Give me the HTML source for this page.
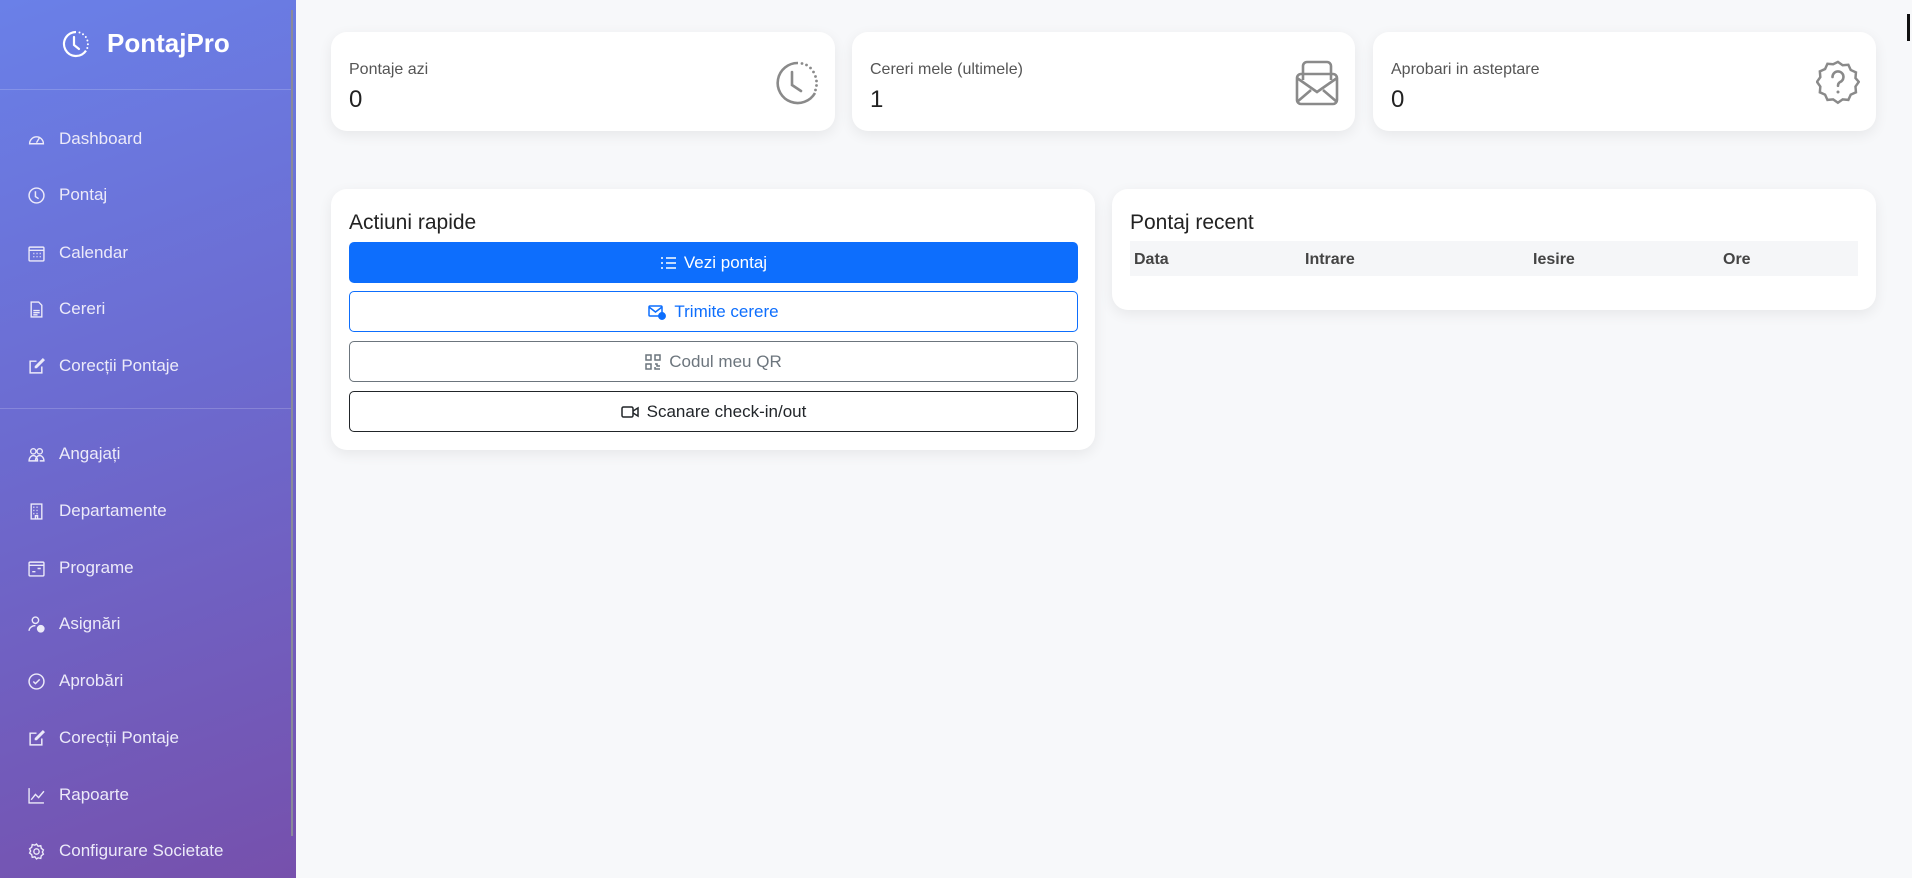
<!DOCTYPE html>
<html><head><meta charset="utf-8"><style>
*{box-sizing:border-box;margin:0;padding:0}
body{width:1912px;height:878px;overflow:hidden;background:#f7f8fa;font-family:"Liberation Sans",sans-serif;position:relative;color:#212529}
.sb{position:absolute;left:0;top:0;width:296px;height:878px;background:linear-gradient(160deg,#6a80e8 0%,#6c6bd0 45%,#7650ac 100%)}
.sbline{position:absolute;left:291px;top:10px;width:2px;height:826px;background:#8a8a9a}
.logo{position:absolute;left:62px;top:28px;display:flex;align-items:center;color:#fff;font-weight:bold;font-size:26px}
.logo svg{margin-right:17px}
.hr{position:absolute;left:0;width:292px;height:1px;background:rgba(255,255,255,.18)}
.nav{position:absolute;left:28px;display:flex;align-items:center;color:#eceaf9;font-size:17px}
.nav svg{width:17px;height:17px;margin-right:14px}
.card{position:absolute;background:#fff;border-radius:16px;box-shadow:0 4px 14px rgba(0,0,0,.07)}
.lbl{position:absolute;left:18px;top:29px;font-size:16px;color:#555}
.val{position:absolute;left:18px;top:54px;font-size:24px;color:#222}
.ic{position:absolute;right:16px;top:28px}
.ttl{position:absolute;left:18px;top:22px;font-size:21px;color:#222}
.btn{position:absolute;left:18px;width:729px;height:41px;border-radius:5px;display:flex;align-items:center;justify-content:center;font-size:17px}
.btn svg{margin-right:8px}
</style></head><body>
<div class="sb">
<div class="logo"><svg width="28" height="28" viewBox="0 0 28 28" fill="none" stroke="#fff" stroke-width="2.2"><path d="M14 2a12 12 0 1 0 10 18.6" /><path d="M12 7v8l5 4" stroke-linecap="round"/><g fill="#fff" stroke="none"><circle cx="17.5" cy="2.5" r="1"/><circle cx="21" cy="4.2" r="1"/><circle cx="23.8" cy="7" r="1"/><circle cx="25.4" cy="10.5" r="1"/><circle cx="25.9" cy="14.3" r="1"/><circle cx="25.3" cy="18" r="1"/></g></svg>PontajPro</div>
<div class="hr" style="top:89px"></div>
<div class="hr" style="top:408px"></div>
</div>
<div class="sbline"></div>

<div class="card" style="left:331px;top:32px;width:504px;height:99px"><div class="lbl">Pontaje azi</div><div class="val">0</div>
<svg class="ic" style="right:14px" width="46" height="46" viewBox="0 0 46 46" fill="none" stroke="#8a8a8a" stroke-width="2.6"><path d="M23 3a20 20 0 1 0 17 30"/><path d="M17 12v13l9 6" stroke-linecap="round"/><g fill="#8a8a8a" stroke="none"><circle cx="27" cy="3.5" r="1.4"/><circle cx="31.5" cy="5" r="1.4"/><circle cx="35.5" cy="8" r="1.4"/><circle cx="38.5" cy="12" r="1.4"/><circle cx="40.5" cy="16.5" r="1.4"/><circle cx="41.5" cy="21" r="1.4"/><circle cx="41.5" cy="25.5" r="1.4"/><circle cx="40.5" cy="30" r="1.4"/></g></svg></div>
<div class="card" style="left:852px;top:32px;width:503px;height:99px"><div class="lbl">Cereri mele (ultimele)</div><div class="val">1</div>
<svg class="ic" width="44" height="46" viewBox="0 0 44 46" fill="none" stroke="#8a8a8a" stroke-width="2.6"><rect x="2" y="14" width="40" height="30" rx="4"/><path d="M8 20V6a4 4 0 0 1 4-4h20a4 4 0 0 1 4 4v14"/><path d="M2 18l20 14 20-14M2 42l14-12M42 42 28 30"/></svg></div>
<div class="card" style="left:1373px;top:32px;width:503px;height:99px"><div class="lbl">Aprobari in asteptare</div><div class="val">0</div>
<svg class="ic" width="44" height="46" viewBox="0 0 44 46" fill="none" stroke="#8a8a8a" stroke-width="2.6"><path d="M22 2l5 3.5 6-.5 2.5 5.5 5.5 2.5-.5 6L44 23l-3.5 5 .5 6-5.5 2.5L33 42l-6-.5L22 45l-5-3.5-6 .5-2.5-5.5L3 34l.5-6L0 23l3.5-5-.5-6 5.5-2.5L11 4l6 .5z" transform="translate(1 0) scale(.95)"/><path d="M16.5 17a5.5 5.5 0 1 1 8 4.8c-1.8 1-2.5 2-2.5 4" stroke-linecap="round"/><circle cx="22" cy="32" r="1.5" fill="#8a8a8a" stroke="none"/></svg></div>

<div class="card" style="left:331px;top:189px;width:764px;height:261px"><div class="ttl">Actiuni rapide</div>
<div class="btn" style="top:53px;background:#0d6efd;color:#fff"><svg width="16" height="14" viewBox="0 0 16 14" fill="none" stroke="#fff" stroke-width="1.6"><path d="M6 2h10M6 7h10M6 12h10M1 2h2M1 7h2M1 12h2"/></svg>Vezi pontaj</div>
<div class="btn" style="top:102px;border:1px solid #0d6efd;color:#0d6efd"><svg width="18" height="16" viewBox="0 0 18 16" fill="none" stroke="#0d6efd" stroke-width="1.5"><rect x="1" y="2" width="13" height="10" rx="1"/><path d="M1 3l6.5 5L14 3"/><circle cx="14" cy="12" r="3.2" fill="#0d6efd"/></svg>Trimite cerere</div>
<div class="btn" style="top:152px;border:1px solid #6c757d;color:#6c757d"><svg width="16" height="16" viewBox="0 0 16 16" fill="none" stroke="#6c757d" stroke-width="1.5"><rect x="1" y="1" width="5" height="5"/><rect x="10" y="1" width="5" height="5"/><rect x="1" y="10" width="5" height="5"/><path d="M10 10h2v2h3M10 13v2h5"/></svg>Codul meu QR</div>
<div class="btn" style="top:202px;border:1px solid #212529;color:#212529"><svg width="18" height="14" viewBox="0 0 18 14" fill="none" stroke="#212529" stroke-width="1.5"><rect x="1" y="2" width="11" height="10" rx="1.5"/><path d="M12 6l5-3v8l-5-3"/></svg>Scanare check-in/out</div>
</div>

<div class="card" style="left:1112px;top:189px;width:764px;height:121px"><div class="ttl">Pontaj recent</div>
<div style="position:absolute;left:18px;top:52px;width:728px;height:35px;background:#f5f6f8"></div>
<div style="position:absolute;left:22px;top:62px;font-weight:bold;font-size:16px;color:#444">Data</div>
<div style="position:absolute;left:193px;top:62px;font-weight:bold;font-size:16px;color:#444">Intrare</div>
<div style="position:absolute;left:421px;top:62px;font-weight:bold;font-size:16px;color:#444">Iesire</div>
<div style="position:absolute;left:611px;top:62px;font-weight:bold;font-size:16px;color:#444">Ore</div>
</div>
<div style="position:absolute;left:1907px;top:14px;width:3px;height:27px;background:#111"></div>

<div class="nav" style="top:129px"><svg viewBox="0 0 16 16" fill="none" stroke="#eceaf9" stroke-width="1.3"><path d="M1.5 12a6.5 6.5 0 1 1 13 0H1.5z"/><path d="M8 11l3-5"/></svg>Dashboard</div>
<div class="nav" style="top:185px"><svg viewBox="0 0 16 16" fill="none" stroke="#eceaf9" stroke-width="1.4"><circle cx="8" cy="8" r="7"/><path d="M7 4v5l3 2"/></svg>Pontaj</div>
<div class="nav" style="top:243px"><svg viewBox="0 0 16 16" fill="none" stroke="#eceaf9" stroke-width="1.3"><rect x="1" y="2" width="14" height="13" rx="1"/><path d="M1 5h14M5 8h1M8 8h1M11 8h1M5 11h1M8 11h1M11 11h1"/></svg>Calendar</div>
<div class="nav" style="top:299px"><svg viewBox="0 0 16 16" fill="none" stroke="#eceaf9" stroke-width="1.3"><path d="M3 1h7l3 3v11H3z"/><path d="M5 9h6M5 11h6M5 13h4"/></svg>Cereri</div>
<div class="nav" style="top:356px"><svg viewBox="0 0 16 16" fill="none" stroke="#eceaf9" stroke-width="1.4"><path d="M13 8v6H2V3h6"/><path d="M14 1l1 1-7 7H7V8z"/></svg>Corecții Pontaje</div>
<div class="nav" style="top:444px"><svg viewBox="0 0 16 16" fill="none" stroke="#eceaf9" stroke-width="1.3"><circle cx="5" cy="5" r="2.5"/><circle cx="11" cy="5" r="2.5"/><path d="M1 14c0-3 2-5 4-5s4 2 4 5zM7 14c0-3 2-5 4-5s4 2 4 5h-4"/></svg>Angajați</div>
<div class="nav" style="top:501px"><svg viewBox="0 0 16 16" fill="none" stroke="#eceaf9" stroke-width="1.3"><rect x="3" y="1" width="10" height="14"/><path d="M5 4h1M8 4h1M11 4h0M5 7h1M8 7h1M5 10h1M8 10h1M7 15v-3h2v3"/></svg>Departamente</div>
<div class="nav" style="top:558px"><svg viewBox="0 0 16 16" fill="none" stroke="#eceaf9" stroke-width="1.3"><rect x="1" y="2" width="14" height="13" rx="1"/><path d="M1 5h14M4 11h3M9 8h3"/></svg>Programe</div>
<div class="nav" style="top:614px"><svg viewBox="0 0 16 16" fill="none" stroke="#eceaf9" stroke-width="1.3"><circle cx="7" cy="4" r="3"/><path d="M1 14c0-3 3-5 6-5"/><circle cx="12" cy="12" r="3" fill="#eceaf9"/></svg>Asignări</div>
<div class="nav" style="top:671px"><svg viewBox="0 0 16 16" fill="none" stroke="#eceaf9" stroke-width="1.4"><circle cx="8" cy="8" r="7"/><path d="M5 8l2 2 4-4"/></svg>Aprobări</div>
<div class="nav" style="top:728px"><svg viewBox="0 0 16 16" fill="none" stroke="#eceaf9" stroke-width="1.4"><path d="M13 8v6H2V3h6"/><path d="M14 1l1 1-7 7H7V8z"/></svg>Corecții Pontaje</div>
<div class="nav" style="top:785px"><svg viewBox="0 0 16 16" fill="none" stroke="#eceaf9" stroke-width="1.3"><path d="M1 1v14h14M3 12l4-5 3 3 5-6"/></svg>Rapoarte</div>
<div class="nav" style="top:841px"><svg viewBox="0 0 16 16" fill="none" stroke="#eceaf9" stroke-width="1.3"><circle cx="8" cy="8" r="2.5"/><path d="M8 1l1.5 2 2.5-.5.5 2.5 2 1.5-1 2 1 2-2 1.5-.5 2.5-2.5-.5L8 15l-1.5-2-2.5.5-.5-2.5-2-1.5 1-2-1-2 2-1.5.5-2.5 2.5.5z"/></svg>Configurare Societate</div>
</body></html>
